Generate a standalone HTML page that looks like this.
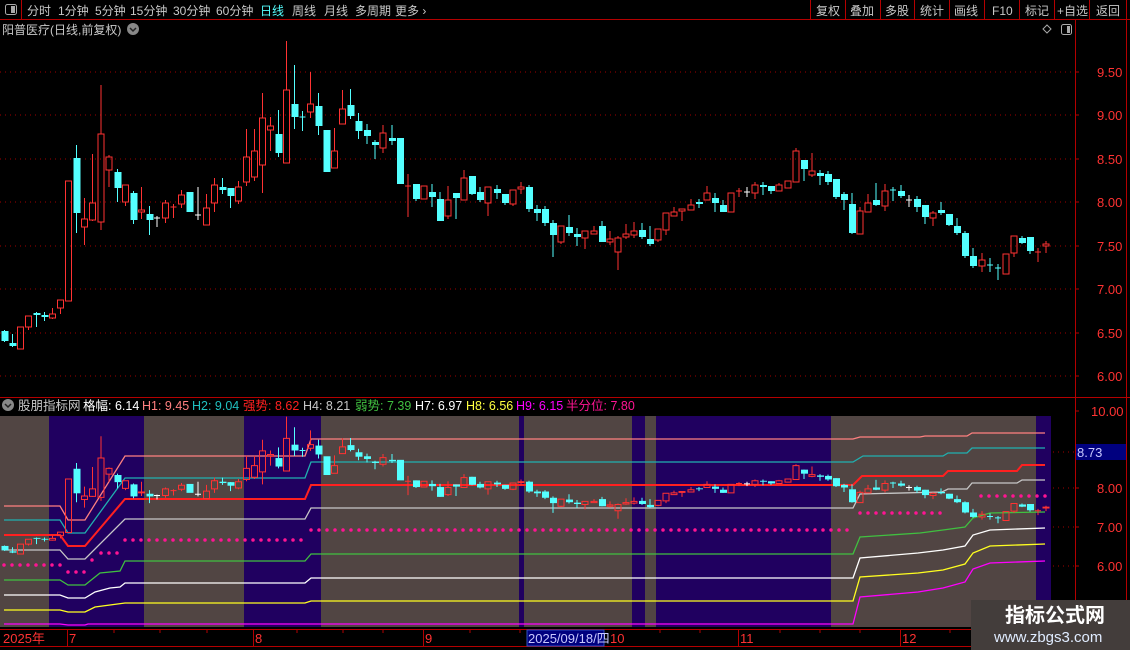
<!DOCTYPE html>
<html><head><meta charset="utf-8"><style>
html,body{margin:0;padding:0;background:#000;}
svg{display:block;font-family:"Liberation Sans","Noto Sans CJK SC",sans-serif;}
</style></head><body>
<svg width="1130" height="650" viewBox="0 0 1130 650" xmlns="http://www.w3.org/2000/svg">
<rect width="1130" height="650" fill="#000"/>
<g stroke="#b40000" stroke-width="1" fill="none">
<path d="M0 19.5H1130M21.5 0V19M810.5 0V19M845.5 0V19M880.5 0V19M914.5 0V19M949.5 0V19M984.5 0V19M1019.5 0V19M1054.5 0V19M1089.5 0V19M1126.5 0V19"/>
</g>
<rect x="5.5" y="4.5" width="11" height="10" rx="2" fill="none" stroke="#aaa"/><rect x="11" y="6" width="4" height="7" fill="#aaa"/>
<g font-size="12" fill="#c8c8c8">
<text x="27" y="15">分时</text><text x="58" y="15">1分钟</text><text x="95" y="15">5分钟</text><text x="130" y="15">15分钟</text><text x="173" y="15">30分钟</text><text x="216" y="15">60分钟</text>
<text x="260" y="15" fill="#54ffff">日线</text><text x="292" y="15">周线</text><text x="324" y="15">月线</text><text x="355" y="15">多周期</text><text x="395" y="15">更多 ›</text>
<text x="816" y="15">复权</text><text x="850" y="15">叠加</text><text x="885" y="15">多股</text><text x="920" y="15">统计</text><text x="954" y="15">画线</text><text x="992" y="15">F10</text><text x="1025" y="15">标记</text><text x="1057" y="15">+自选</text><text x="1096" y="15">返回</text>
<text x="2" y="34">阳普医疗(日线,前复权)</text>
</g>
<circle cx="133" cy="29" r="6" fill="#888"/><path d="M130 28l3 3 3-3" stroke="#222" stroke-width="1.5" fill="none"/>
<path d="M1047 25l4 4-4 4-4-4z" fill="none" stroke="#aaa"/>
<rect x="1061.5" y="24.5" width="10" height="10" rx="2" fill="none" stroke="#aaa"/><rect x="1067" y="26" width="3" height="7" fill="#aaa"/>
<path d="M1075.5 20V650M1126.5 20V650M0 397.5H1130M0 629.5H1130M0 646.5H1130" stroke="#b40000" fill="none"/>
<g stroke="#b40000"><path d="M1075 72h4M1075 115h4M1075 159h4M1075 202h4M1075 246h4M1075 289h4M1075 333h4M1075 376h4M1075 411h4M1075 488h4M1075 527h4M1075 566h4"/></g>
<g fill="#ff3232" font-size="13">
<text x="1097" y="77">9.50</text><text x="1097" y="120">9.00</text><text x="1097" y="164">8.50</text><text x="1097" y="207">8.00</text><text x="1097" y="251">7.50</text><text x="1097" y="294">7.00</text><text x="1097" y="338">6.50</text><text x="1097" y="381">6.00</text>
<text x="1091" y="416">10.00</text><text x="1097" y="493">8.00</text><text x="1097" y="532">7.00</text><text x="1097" y="571">6.00</text>
</g>
<rect x="1076" y="444" width="50" height="16" fill="#00007f"/><text x="1077" y="457" fill="#c8c8ff" font-size="13">8.73</text>
<g stroke="#a00000" stroke-dasharray="1 4" fill="none">
<path d="M0 72H1073M0 115H1073M0 159H1073M0 202H1073M0 246H1073M0 289H1073M0 333H1073M0 376H1073"/>
<path d="M1053 452H1075M1053 488H1075M1053 527H1075M1053 566H1075"/>
</g>
<circle cx="8" cy="405" r="6" fill="#888"/><path d="M5 404l3 3 3-3" stroke="#222" stroke-width="1.5" fill="none"/>
<g font-size="12.5">
<text x="18" y="410" fill="#c8c8c8">股朋指标网</text><text x="83" y="410" fill="#fff">格幅: 6.14</text>
<text x="142" y="410" fill="#ff8080">H1: 9.45</text><text x="192" y="410" fill="#20c0c0">H2: 9.04</text>
<text x="243" y="410" fill="#ff2020">强势: 8.62</text><text x="303" y="410" fill="#c8c8c8">H4: 8.21</text>
<text x="355" y="410" fill="#40c040">弱势: 7.39</text><text x="415" y="410" fill="#fff">H7: 6.97</text>
<text x="466" y="410" fill="#ffff40">H8: 6.56</text><text x="516" y="410" fill="#ff00ff">H9: 6.15</text>
<text x="566" y="410" fill="#ff1493">半分位: 7.80</text>
</g>
<rect x="0" y="416" width="1051" height="211" fill="#514543"/>
<g fill="#200060">
<rect x="49" y="416" width="95" height="211"/><rect x="244" y="416" width="77" height="211"/><rect x="519" y="416" width="5" height="211"/><rect x="632" y="416" width="13" height="211"/><rect x="656" y="416" width="175" height="211"/><rect x="1036" y="416" width="15" height="211"/>
</g>
<g fill="none" stroke-width="1.3">
<polyline stroke="#ff8080" points="4,506 60,506 68,520 85,520 125,456 305,456 311,439 853,439 860,437 920,437 925,436 967,436 972,433 1045,433"/>
<polyline stroke="#20b0b0" points="4,520 60,520 68,533 85,533 125,478 305,478 311,462 853,462 863,456 943,456 948,453 967,453 972,448 1045,448"/>
<polyline stroke="#ff2020" stroke-width="2" points="4,535 60,535 68,546 85,546 125,499 305,499 311,485 853,485 862,476 943,476 948,471 1017,471 1022,465 1045,465"/>
<polyline stroke="#c8c8c8" points="4,550 60,550 68,559 85,559 125,519 305,519 311,508 853,508 860,494 942,492 948,489 967,489 972,483 1017,483 1022,480 1045,480"/>
<polyline stroke="#40c040" points="4,580 60,580 68,585 85,585 100,573 120,571 125,561 305,561 311,554 853,554 860,537 920,533 943,530 965,527 973,518 990,513 1045,512"/>
<polyline stroke="#ffffff" points="4,595 60,595 68,598 85,598 95,592 110,588 120,587 125,583 305,583 311,578 853,578 860,558 918,553 943,550 965,546 973,535 990,530 1045,528"/>
<polyline stroke="#ffff20" points="4,610 60,610 68,612 85,612 95,607 125,603 305,603 311,601 853,601 860,577 918,573 943,570 965,564 973,553 990,546 1045,544"/>
<polyline stroke="#ff00ff" points="4,624 60,624 68,625 85,625 88,624 853,624 860,597 918,592 943,588 965,582 973,569 990,563 1045,561"/>
</g>
<g stroke="#ff1493" stroke-width="3.5" stroke-linecap="round" fill="none">
<path d="M4 565h0M12 565h0M20 565h0M28 565h0M36 565h0M44 565h0M52 565h0M60 565h0M68 572h0M76 572h0M84 572h0M92 560h0M101 553h0M109 553h0M117 553h0"/>
<path d="M125 540H305" stroke-dasharray="0 8"/>
<path d="M311 530H853" stroke-dasharray="0 8"/>
<path d="M860 513H944" stroke-dasharray="0 8"/>
<path d="M949 508h0M957 508h0M965 508h0M973 500h0M981 496H1046" stroke-dasharray="0 8"/>
</g>
<defs>
<g id="cd">
<g stroke="#ff3232" fill="none" stroke-width="1">
<path vector-effect="non-scaling-stroke" d="M28.5 327V330M52.5 308V314M52.5 318V319M60.5 308V314M84.5 198V219M84.5 227V245M92.5 154V203M92.5 220V221M101 85V134M101 222V230M109 155V157M109 170V187M125.5 202V206M141.5 187V210M141.5 212V219M165.5 200V203M165.5 218V223M181.5 190V195M181.5 204V208M206.5 194V208M214.5 178V185M214.5 203V212M238.5 181V187M238.5 201V204M246.5 129V157M246.5 182V186M254.5 129V151M254.5 177V181M262.5 93V118M262.5 165V193M270.5 117V126M270.5 130V151M286.5 41V90M310.5 72V104M310.5 112V118M334.5 128V151M342.5 90V109M383 125V133M383 148V153M448 186V200M448 216V219M464 170V178M488 203V216M513 204V206M521 182V187M521 189V194M561 242V244M585 238V249M594 226V231M610 231V239M610 242V245M618 236V238M618 252V270M626 224V234M626 237V239M634 222V231M634 235V238M658 240V242M666 230V235M674 207V212M682 211V221M691 199V205M707 186V193M755 182V185M755 193V199M779 183V185M796 148V151M812 153V171M812 175V177M860 207V211M868 194V203M885 184V191M885 206V211M933 211V213M933 218V226M982 253V260M982 266V272M1014 253V257M1046 241V244M1046 246V253M170.5 207H176.5M173.5 204V218M405 186H411M408 174V217M736 191H742M739 188V197M1035 252H1041M1038 248V262"/>
<g>
<rect vector-effect="non-scaling-stroke" x="17.5" y="327" width="6" height="22"/><rect vector-effect="non-scaling-stroke" x="25.5" y="316" width="6" height="11"/><rect vector-effect="non-scaling-stroke" x="49.5" y="314" width="6" height="4"/><rect vector-effect="non-scaling-stroke" x="57.5" y="300" width="6" height="8"/><rect vector-effect="non-scaling-stroke" x="65.5" y="181" width="6" height="120"/><rect vector-effect="non-scaling-stroke" x="81.5" y="219" width="6" height="8"/><rect vector-effect="non-scaling-stroke" x="89.5" y="203" width="6" height="17"/><rect vector-effect="non-scaling-stroke" x="98" y="134" width="6" height="88"/><rect vector-effect="non-scaling-stroke" x="106" y="157" width="6" height="13"/><rect vector-effect="non-scaling-stroke" x="122.5" y="185" width="6" height="17"/><rect vector-effect="non-scaling-stroke" x="138.5" y="210" width="6" height="2"/><rect vector-effect="non-scaling-stroke" x="162.5" y="203" width="6" height="15"/><rect vector-effect="non-scaling-stroke" x="178.5" y="195" width="6" height="9"/><rect vector-effect="non-scaling-stroke" x="203.5" y="208" width="6" height="17"/><rect vector-effect="non-scaling-stroke" x="211.5" y="185" width="6" height="18"/><rect vector-effect="non-scaling-stroke" x="235.5" y="187" width="6" height="14"/><rect vector-effect="non-scaling-stroke" x="243.5" y="157" width="6" height="25"/><rect vector-effect="non-scaling-stroke" x="251.5" y="151" width="6" height="26"/><rect vector-effect="non-scaling-stroke" x="259.5" y="118" width="6" height="47"/><rect vector-effect="non-scaling-stroke" x="267.5" y="126" width="6" height="4"/><rect vector-effect="non-scaling-stroke" x="283.5" y="90" width="6" height="73"/><rect vector-effect="non-scaling-stroke" x="307.5" y="104" width="6" height="8"/><rect vector-effect="non-scaling-stroke" x="331.5" y="151" width="6" height="17"/><rect vector-effect="non-scaling-stroke" x="339.5" y="109" width="6" height="15"/><rect vector-effect="non-scaling-stroke" x="380" y="133" width="6" height="15"/><rect vector-effect="non-scaling-stroke" x="421" y="186" width="6" height="13"/><rect vector-effect="non-scaling-stroke" x="445" y="200" width="6" height="16"/><rect vector-effect="non-scaling-stroke" x="461" y="178" width="6" height="22"/><rect vector-effect="non-scaling-stroke" x="485" y="187" width="6" height="16"/><rect vector-effect="non-scaling-stroke" x="510" y="190" width="6" height="14"/><rect vector-effect="non-scaling-stroke" x="518" y="187" width="6" height="2"/><rect vector-effect="non-scaling-stroke" x="558" y="226" width="6" height="16"/><rect vector-effect="non-scaling-stroke" x="582" y="231" width="6" height="7"/><rect vector-effect="non-scaling-stroke" x="591" y="231" width="6" height="3"/><rect vector-effect="non-scaling-stroke" x="607" y="239" width="6" height="3"/><rect vector-effect="non-scaling-stroke" x="615" y="238" width="6" height="14"/><rect vector-effect="non-scaling-stroke" x="623" y="234" width="6" height="3"/><rect vector-effect="non-scaling-stroke" x="631" y="231" width="6" height="4"/><rect vector-effect="non-scaling-stroke" x="655" y="229" width="6" height="11"/><rect vector-effect="non-scaling-stroke" x="663" y="213" width="6" height="17"/><rect vector-effect="non-scaling-stroke" x="671" y="212" width="6" height="4"/><rect vector-effect="non-scaling-stroke" x="679" y="209" width="6" height="2"/><rect vector-effect="non-scaling-stroke" x="688" y="205" width="6" height="5"/><rect vector-effect="non-scaling-stroke" x="704" y="193" width="6" height="7"/><rect vector-effect="non-scaling-stroke" x="728" y="193" width="6" height="19"/><rect vector-effect="non-scaling-stroke" x="752" y="185" width="6" height="8"/><rect vector-effect="non-scaling-stroke" x="776" y="185" width="6" height="6"/><rect vector-effect="non-scaling-stroke" x="785" y="181" width="6" height="7"/><rect vector-effect="non-scaling-stroke" x="793" y="151" width="6" height="31"/><rect vector-effect="non-scaling-stroke" x="809" y="171" width="6" height="4"/><rect vector-effect="non-scaling-stroke" x="857" y="211" width="6" height="23"/><rect vector-effect="non-scaling-stroke" x="865" y="203" width="6" height="9"/><rect vector-effect="non-scaling-stroke" x="882" y="191" width="6" height="15"/><rect vector-effect="non-scaling-stroke" x="930" y="213" width="6" height="5"/><rect vector-effect="non-scaling-stroke" x="979" y="260" width="6" height="6"/><rect vector-effect="non-scaling-stroke" x="1003" y="254" width="6" height="20"/><rect vector-effect="non-scaling-stroke" x="1011" y="236" width="6" height="17"/><rect vector-effect="non-scaling-stroke" x="1043" y="244" width="6" height="2"/>
</g>
</g>
<g fill="#54ffff" stroke="#54ffff">
<path vector-effect="non-scaling-stroke" fill="none" d="M4.5 330V342M12.5 334V347M36.5 312V327M44.5 312V321M76.5 145V233M117.5 169V202M133.5 191V224M149.5 206V235M222.5 178V194M230.5 188V208M278.5 110V157M294.5 65V129M318.5 93V135M350.5 89V119M358.5 113V139M367 124V144M375 140V159M392 125V145M416 184V201M432 184V207M440 192V221M456 193V219M472 176V195M480 187V202M497 185V199M505 194V205M529 185V212M537 205V221M545 206V226M553 220V257M569 215V236M577 228V246M602 221V242M642 223V239M650 226V246M699 199V208M715 193V212M723 200V212M763 182V195M771 186V194M804 160V181M820 170V185M828 171V185M836 179V199M844 192V210M852 193V234M876 183V206M901 185V198M917 196V212M925 205V224M941 202V215M949 214V226M957 218V235M965 231V258M973 248V268M1022 236V244M1030 237V254M299.5 117H305.5M302.5 111V131M890 190H896M893 187V201M987 265H993M990 258V272M995 268H1001M998 264V280"/>
<g stroke="none">
<rect x="1.5" y="331" width="7" height="10"/><rect x="9.5" y="343" width="7" height="3"/><rect x="33.5" y="313" width="7" height="2"/><rect x="41.5" y="315" width="7" height="2"/><rect x="73.5" y="158" width="7" height="55"/><rect x="114.5" y="172" width="7" height="16"/><rect x="130.5" y="193" width="7" height="27"/><rect x="146.5" y="214" width="7" height="6"/><rect x="186.5" y="192" width="7" height="20"/><rect x="219.5" y="187" width="7" height="3"/><rect x="227.5" y="188" width="7" height="8"/><rect x="275.5" y="134" width="7" height="19"/><rect x="291.5" y="104" width="7" height="13"/><rect x="315.5" y="106" width="7" height="20"/><rect x="323.5" y="130" width="7" height="42"/><rect x="347.5" y="105" width="7" height="11"/><rect x="355.5" y="121" width="7" height="10"/><rect x="364" y="130" width="7" height="6"/><rect x="372" y="142" width="7" height="3"/><rect x="389" y="138" width="7" height="3"/><rect x="397" y="138" width="7" height="46"/><rect x="413" y="184" width="7" height="15"/><rect x="429" y="192" width="7" height="5"/><rect x="437" y="199" width="7" height="22"/><rect x="453" y="193" width="7" height="5"/><rect x="469" y="176" width="7" height="18"/><rect x="477" y="192" width="7" height="8"/><rect x="494" y="189" width="7" height="4"/><rect x="502" y="194" width="7" height="9"/><rect x="526" y="187" width="7" height="22"/><rect x="534" y="209" width="7" height="4"/><rect x="542" y="209" width="7" height="14"/><rect x="550" y="223" width="7" height="12"/><rect x="566" y="227" width="7" height="6"/><rect x="574" y="234" width="7" height="3"/><rect x="599" y="226" width="7" height="16"/><rect x="639" y="230" width="7" height="7"/><rect x="647" y="239" width="7" height="5"/><rect x="696" y="202" width="7" height="2"/><rect x="712" y="198" width="7" height="5"/><rect x="720" y="205" width="7" height="7"/><rect x="760" y="185" width="7" height="2"/><rect x="768" y="186" width="7" height="5"/><rect x="801" y="160" width="7" height="9"/><rect x="817" y="173" width="7" height="3"/><rect x="825" y="174" width="7" height="8"/><rect x="833" y="179" width="7" height="18"/><rect x="841" y="194" width="7" height="6"/><rect x="849" y="204" width="7" height="29"/><rect x="873" y="200" width="7" height="5"/><rect x="898" y="191" width="7" height="5"/><rect x="914" y="199" width="7" height="8"/><rect x="922" y="205" width="7" height="12"/><rect x="938" y="210" width="7" height="3"/><rect x="946" y="214" width="7" height="11"/><rect x="954" y="226" width="7" height="7"/><rect x="962" y="233" width="7" height="23"/><rect x="970" y="256" width="7" height="10"/><rect x="1019" y="238" width="7" height="5"/><rect x="1027" y="237" width="7" height="14"/>
</g>
</g>
<path vector-effect="non-scaling-stroke" stroke="#fff" fill="none" d="M154 218H160M157 216V227M195 215H201M198 187V220M744 192H750M747 187V197M906 200H912M909 195V207"/>
</g>
</defs>
<use href="#cd"/>
<use href="#cd" transform="matrix(1 0 0 0.4461 0 398.28)"/>
<g stroke="#b40000" fill="none"><path d="M67.5 630V646M253.5 630V646M423.5 630V646M738.5 630V646M900.5 630V646M114 630v3M160 630v3M207 630v3M297 630v3M343 630v3M383 630v3M470 630v3M520 630v3M660 630v3M700 630v3M780 630v3M820 630v3M860 630v3M950 630v3M1000 630v3"/></g>
<g fill="#ff3232" font-size="13">
<text x="3" y="643">2025年</text><text x="69" y="643">7</text><text x="255" y="643">8</text><text x="425" y="643">9</text><text x="610" y="643">10</text><text x="740" y="643">11</text><text x="902" y="643">12</text>
</g>
<rect x="527" y="630" width="77" height="16" fill="#00007f" stroke="#3050c0"/><text x="528" y="643" fill="#c8c8ff" font-size="13">2025/09/18/四</text>
<rect x="971" y="600" width="159" height="50" fill="#433d3b"/>
<text x="1005" y="622" fill="#fff" font-size="20" font-weight="bold">指标公式网</text>
<text x="994" y="642" fill="#e0ecff" font-size="15">www.zbgs3.com</text>
</svg>
</body></html>
